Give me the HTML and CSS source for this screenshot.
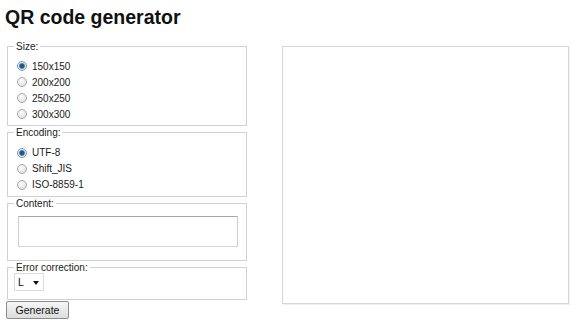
FILE: index.html
```html
<!DOCTYPE html>
<html lang="en">
<head>
<meta charset="utf-8">
<title>QR code generator</title>
<link rel="stylesheet" href="styles.css">
</head>
<body>
<h1 class="title">QR code generator</h1>
<div class="layout">
  <form class="controls">
    <fieldset class="group">
      <legend class="group-label">Size:</legend>
      <label class="option"><input class="radio" type="radio" name="size" checked><span>150x150</span></label>
      <label class="option"><input class="radio" type="radio" name="size"><span>200x200</span></label>
      <label class="option"><input class="radio" type="radio" name="size"><span>250x250</span></label>
      <label class="option"><input class="radio" type="radio" name="size"><span>300x300</span></label>
    </fieldset>
    <fieldset class="group">
      <legend class="group-label">Encoding:</legend>
      <label class="option"><input class="radio" type="radio" name="enc" checked><span>UTF-8</span></label>
      <label class="option"><input class="radio" type="radio" name="enc"><span>Shift_JIS</span></label>
      <label class="option"><input class="radio" type="radio" name="enc"><span>ISO-8859-1</span></label>
    </fieldset>
    <fieldset class="group group-content">
      <legend class="group-label">Content:</legend>
      <textarea class="content-input"></textarea>
    </fieldset>
    <fieldset class="group group-ec">
      <legend class="group-label">Error correction:</legend>
      <span class="select-wrap"><select class="select"><option>L</option><option>M</option><option>Q</option><option>H</option></select></span>
    </fieldset>
    <button class="generate" type="button">Generate</button>
  </form>
  <div class="preview"></div>
</div>
</body>
</html>
```

FILE: styles.css
```css
html, body {
  background: #fff;
}
body {
  margin: 0;
  padding: 5px 0 0 5px;
  font-family: "Liberation Sans", Arial, sans-serif;
  font-size: 10px;
  color: #1a1a1a;
}
.title {
  margin: 0;
  font-size: 19.5px;
  font-weight: bold;
  line-height: 24px;
  color: #111;
}
.layout {
  display: flex;
  align-items: flex-start;
  margin-top: 10.5px;
}
.controls {
  width: 242px;
  display: flex;
  flex-direction: column;
  align-items: flex-start;
  margin: 0;
}
.group {
  box-sizing: border-box;
  width: 240px;
  min-width: 0;
  margin: 0 0 0 2px;
  padding: 5.5px 6px 3px;
  border: 1px solid #d2d2d2;
}
.group-label {
  padding: 0 2px;
  line-height: 13px;
  font-size: 10px;
  color: #222;
}
.option {
  display: flex;
  align-items: center;
  height: 16px;
  padding-left: 3px;
}
.radio {
  appearance: none;
  -webkit-appearance: none;
  box-sizing: border-box;
  width: 10px;
  height: 10px;
  margin: 0 5px 0 0;
  border-radius: 50%;
  border: 1px solid #a8a8a8;
  background: radial-gradient(circle at 40% 35%, #ffffff, #d6d6d6);
}
.radio:checked {
  border-color: #8a9aa8;
  background: radial-gradient(circle, #1d5a88 0 2px, #5f95c0 2.6px, #dfe8ef 3.4px);
}
.group-content {
  padding-top: 3.5px;
  padding-bottom: 6px;
}
.content-input {
  display: block;
  box-sizing: border-box;
  width: 220px;
  height: 31px;
  margin: 2.5px 0 7.5px 4px;
  border: 1px solid;
  border-color: #a8a8a8 #d0d0d0 #d8d8d8 #d0d0d0;
  resize: none;
  padding: 2px;
  font: 10px "Liberation Sans", Arial, sans-serif;
}
.group-ec {
  padding-top: 0;
  padding-bottom: 8px;
}
.select-wrap {
  position: relative;
  display: inline-block;
  margin-top: -1.5px;
}
.select {
  appearance: none;
  -webkit-appearance: none;
  display: block;
  box-sizing: border-box;
  width: 30px;
  height: 18px;
  margin: 0;
  padding: 0 0 0 3px;
  border: 1px solid #dcdcdc;
  border-radius: 0;
  background: #fff;
  color: #111;
  font: 10.5px "Liberation Sans", Arial, sans-serif;
}
.select-wrap::after {
  content: "";
  position: absolute;
  left: 19px;
  top: 8px;
  border-left: 3.5px solid transparent;
  border-right: 3.5px solid transparent;
  border-top: 4px solid #111;
  pointer-events: none;
}
.generate {
  box-sizing: border-box;
  width: 63px;
  height: 18px;
  margin: 1.5px 0 0 1px;
  padding: 0;
  border: 1px solid #8c8c8c;
  border-radius: 2px;
  background: linear-gradient(#f7f7f7, #dcdcdc);
  color: #111;
  font: 10.5px "Liberation Sans", Arial, sans-serif;
}
.preview {
  box-sizing: border-box;
  width: 287px;
  height: 258px;
  margin: 6.5px 0 0 35px;
  border: 1px solid #d6d6d6;
  box-shadow: 1px 1px 0 #efefef;
  background: #fff;
}
```
